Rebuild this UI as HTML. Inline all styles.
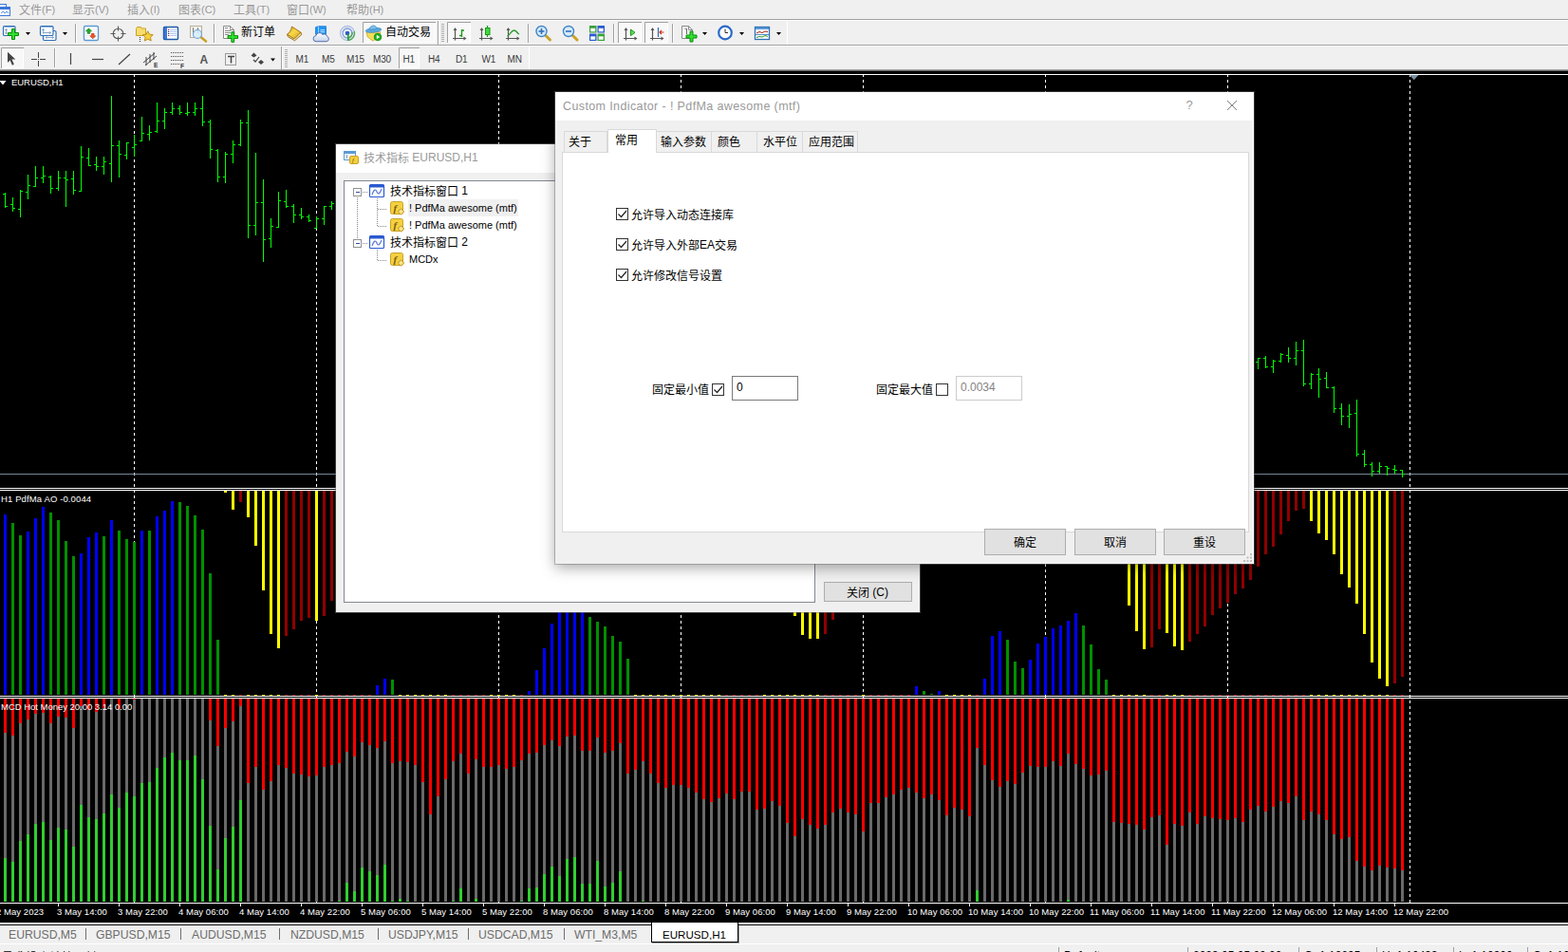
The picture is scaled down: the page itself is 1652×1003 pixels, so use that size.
<!DOCTYPE html><html><head><meta charset="utf-8"><title>MT4</title><style>html,body{margin:0;padding:0}
body{width:1652px;height:1003px;overflow:hidden;position:relative;background:#f0f0f0;font-family:"Liberation Sans","Noto Sans CJK SC",sans-serif;font-size:12px;color:#000}
.lb{position:absolute;white-space:nowrap}
.lb svg{vertical-align:top;display:inline-block;overflow:visible}
.lb svg text{font-family:"Liberation Sans","Noto Sans CJK SC",sans-serif}
.lb span{vertical-align:top;display:inline-block;white-space:pre}
.ct{position:absolute;color:#fff;font-size:9.5px;line-height:12px;white-space:nowrap;letter-spacing:0.05px}
.abs{position:absolute}
.btn{position:absolute;box-sizing:border-box;background:#e1e1e1;border:1px solid #adadad}
.tab{position:absolute;box-sizing:border-box;background:#f0f0f0;border:1px solid #d9d9d9;border-bottom:none}
.cb{position:absolute;box-sizing:border-box;width:13px;height:13px;background:#fff;border:1px solid #333}
.tf{position:absolute;top:57px;font-size:10px;line-height:12px;color:#3c3c3c;letter-spacing:-0.2px}
.ctab{position:absolute;top:978px;font-size:12.2px;line-height:14px;color:#6d6d6d;white-space:nowrap}
.csep{position:absolute;top:978px;width:1px;height:12px;background:#6d6d6d}
.mn span{font-size:11px}
</style></head><body><svg id="chart" width="1652" height="1003" viewBox="0 0 1652 1003" shape-rendering="crispEdges" style="position:absolute;left:0;top:0"><rect x="0" y="73" width="1652" height="1" fill="#a0a0a0"/><rect x="0" y="74" width="1652" height="1" fill="#696969"/><rect x="0" y="75" width="1652" height="897" fill="#000"/><rect x="0" y="78" width="1652" height="1" fill="#fff"/><path d="M141.5 78V952M333.5 78V952M525.5 78V952M717.5 78V952M909.5 78V952M1101.5 78V952M1293.5 78V952M1485.5 78V952" stroke="#fff" stroke-width="1" stroke-dasharray="3 3" fill="none"/><rect x="0" y="499" width="1652" height="1" fill="#778899"/><rect x="0" y="514" width="1652" height="1" fill="#fff"/><rect x="0" y="516" width="1652" height="1" fill="#fff"/><rect x="0" y="733" width="1652" height="1" fill="#fff"/><rect x="0" y="735" width="1652" height="1" fill="#fff"/><rect x="0" y="951" width="1652" height="1" fill="#fff"/><path d="M1485 79h9.500l-4.750 5.300z" fill="#7b8ea3" shape-rendering="auto"/><path d="M5 203h1v16h-1zM3 204h2v1h-2zM6 217h2v1h-2zM13 208h1v15h-1zM11 215h2v1h-2zM14 219h2v1h-2zM21 200h1v29h-1zM19 220h2v1h-2zM22 201h2v1h-2zM29 184h1v26h-1zM27 202h2v1h-2zM30 195h2v1h-2zM37 175h1v22h-1zM35 196h2v1h-2zM38 187h2v1h-2zM45 175h1v18h-1zM43 187h2v1h-2zM46 185h2v1h-2zM53 185h1v19h-1zM51 186h2v1h-2zM54 198h2v1h-2zM61 180h1v21h-1zM59 198h2v1h-2zM62 187h2v1h-2zM69 180h1v38h-1zM67 187h2v1h-2zM70 189h2v1h-2zM77 180h1v25h-1zM75 188h2v1h-2zM78 200h2v1h-2zM85 154h1v48h-1zM83 201h2v1h-2zM86 165h2v1h-2zM93 156h1v19h-1zM91 166h2v1h-2zM94 174h2v1h-2zM101 165h1v15h-1zM99 173h2v1h-2zM102 175h2v1h-2zM109 165h1v19h-1zM107 175h2v1h-2zM110 170h2v1h-2zM117 101h1v91h-1zM115 172h2v1h-2zM118 153h2v1h-2zM125 148h1v39h-1zM123 153h2v1h-2zM126 162h2v1h-2zM133 150h1v18h-1zM131 163h2v1h-2zM134 150h2v1h-2zM141 142h1v23h-1zM139 155h2v1h-2zM142 152h2v1h-2zM149 123h1v26h-1zM147 148h2v1h-2zM150 140h2v1h-2zM157 132h1v16h-1zM155 141h2v1h-2zM158 139h2v1h-2zM165 108h1v32h-1zM163 138h2v1h-2zM166 127h2v1h-2zM173 114h1v22h-1zM171 127h2v1h-2zM174 118h2v1h-2zM181 108h1v13h-1zM179 118h2v1h-2zM182 114h2v1h-2zM189 111h1v10h-1zM187 114h2v1h-2zM190 118h2v1h-2zM197 108h1v14h-1zM195 119h2v1h-2zM198 118h2v1h-2zM205 108h1v14h-1zM203 118h2v1h-2zM206 114h2v1h-2zM213 101h1v32h-1zM211 114h2v1h-2zM214 128h2v1h-2zM221 126h1v41h-1zM219 128h2v1h-2zM222 157h2v1h-2zM229 157h1v35h-1zM227 158h2v1h-2zM230 186h2v1h-2zM237 160h1v33h-1zM235 186h2v1h-2zM238 162h2v1h-2zM245 148h1v24h-1zM243 162h2v1h-2zM246 152h2v1h-2zM253 126h1v28h-1zM251 152h2v1h-2zM254 129h2v1h-2zM261 116h1v135h-1zM259 129h2v1h-2zM262 237h2v1h-2zM269 161h1v87h-1zM267 237h2v1h-2zM270 213h2v1h-2zM277 189h1v87h-1zM275 213h2v1h-2zM278 252h2v1h-2zM285 230h1v31h-1zM283 251h2v1h-2zM286 238h2v1h-2zM293 202h1v38h-1zM291 239h2v1h-2zM294 211h2v1h-2zM301 200h1v19h-1zM299 212h2v1h-2zM302 217h2v1h-2zM309 215h1v20h-1zM307 217h2v1h-2zM310 226h2v1h-2zM317 219h1v12h-1zM315 226h2v1h-2zM318 228h2v1h-2zM325 226h1v8h-1zM323 228h2v1h-2zM326 232h2v1h-2zM333 228h1v13h-1zM331 240h2v1h-2zM334 230h2v1h-2zM341 217h1v20h-1zM339 230h2v1h-2zM342 217h2v1h-2zM349 212h1v9h-1zM347 217h2v1h-2zM350 214h2v1h-2zM1325 377h1v12h-1zM1323 381h2v1h-2zM1326 377h2v1h-2zM1333 375h1v13h-1zM1331 377h2v1h-2zM1334 386h2v1h-2zM1341 379h1v14h-1zM1339 386h2v1h-2zM1342 380h2v1h-2zM1349 372h1v10h-1zM1347 380h2v1h-2zM1350 373h2v1h-2zM1357 366h1v16h-1zM1355 374h2v1h-2zM1358 377h2v1h-2zM1365 360h1v25h-1zM1363 377h2v1h-2zM1366 369h2v1h-2zM1373 358h1v49h-1zM1371 369h2v1h-2zM1374 404h2v1h-2zM1381 393h1v17h-1zM1379 404h2v1h-2zM1382 394h2v1h-2zM1389 388h1v31h-1zM1387 394h2v1h-2zM1390 399h2v1h-2zM1397 392h1v17h-1zM1395 398h2v1h-2zM1398 408h2v1h-2zM1405 407h1v28h-1zM1403 408h2v1h-2zM1406 430h2v1h-2zM1413 425h1v23h-1zM1411 430h2v1h-2zM1414 438h2v1h-2zM1421 426h1v25h-1zM1419 438h2v1h-2zM1422 436h2v1h-2zM1429 421h1v60h-1zM1427 435h2v1h-2zM1430 478h2v1h-2zM1437 474h1v18h-1zM1435 478h2v1h-2zM1438 489h2v1h-2zM1445 487h1v15h-1zM1443 489h2v1h-2zM1446 496h2v1h-2zM1453 487h1v12h-1zM1451 496h2v1h-2zM1454 491h2v1h-2zM1461 491h1v10h-1zM1459 491h2v1h-2zM1462 493h2v1h-2zM1469 490h1v9h-1zM1467 494h2v1h-2zM1470 495h2v1h-2zM1477 495h1v8h-1zM1475 495h2v1h-2zM1478 499h2v1h-2z" fill="#00ff00"/><path d="M4 542h3v190h-3zM28 560h3v172h-3zM36 546h3v186h-3zM44 534h3v198h-3zM84 583h3v149h-3zM92 566h3v166h-3zM100 561h3v171h-3zM116 548h3v184h-3zM148 559h3v173h-3zM164 544h3v188h-3zM172 538h3v194h-3zM180 528h3v204h-3zM396 722h3v10h-3zM404 715h3v17h-3zM556 728h3v4h-3zM564 706h3v26h-3zM572 683h3v49h-3zM580 657h3v75h-3zM588 640h3v92h-3zM596 630h3v102h-3zM604 625h3v107h-3zM612 632h3v100h-3zM964 723h3v9h-3zM988 728h3v4h-3zM1036 715h3v17h-3zM1044 670h3v62h-3zM1052 665h3v67h-3zM1084 695h3v37h-3zM1092 678h3v54h-3zM1100 671h3v61h-3zM1108 662h3v70h-3zM1116 659h3v73h-3zM1124 654h3v78h-3zM1132 646h3v86h-3z" fill="#0000ff"/><path d="M12 551h3v181h-3zM20 564h3v168h-3zM52 540h3v192h-3zM60 548h3v184h-3zM68 570h3v162h-3zM76 586h3v146h-3zM108 565h3v167h-3zM124 559h3v173h-3zM132 568h3v164h-3zM140 571h3v161h-3zM156 559h3v173h-3zM188 529h3v203h-3zM196 533h3v199h-3zM204 543h3v189h-3zM212 558h3v174h-3zM220 604h3v128h-3zM228 674h3v58h-3zM412 716h3v16h-3zM620 650h3v82h-3zM628 655h3v77h-3zM636 660h3v72h-3zM644 670h3v62h-3zM652 676h3v56h-3zM660 694h3v38h-3zM972 728h3v4h-3zM980 731h3v1h-3zM1060 674h3v58h-3zM1068 697h3v35h-3zM1076 704h3v28h-3zM1140 659h3v73h-3zM1148 679h3v53h-3zM1156 705h3v27h-3zM1164 716h3v16h-3z" fill="#009000"/><path d="M236 517h3v2h-3zM236 732h3v1h-3zM244 517h3v20h-3zM244 732h3v1h-3zM260 517h3v28h-3zM260 732h3v1h-3zM268 517h3v58h-3zM268 732h3v1h-3zM276 517h3v105h-3zM276 732h3v1h-3zM284 517h3v151h-3zM284 732h3v1h-3zM292 517h3v166h-3zM292 732h3v1h-3zM332 517h3v137h-3zM332 732h3v1h-3zM420 517h3v3h-3zM420 732h3v1h-3zM428 517h3v8h-3zM428 732h3v1h-3zM436 517h3v13h-3zM436 732h3v1h-3zM444 517h3v18h-3zM444 732h3v1h-3zM452 517h3v23h-3zM452 732h3v1h-3zM460 517h3v28h-3zM460 732h3v1h-3zM468 517h3v33h-3zM468 732h3v1h-3zM516 517h3v13h-3zM516 732h3v1h-3zM524 517h3v18h-3zM524 732h3v1h-3zM532 517h3v23h-3zM532 732h3v1h-3zM540 517h3v13h-3zM540 732h3v1h-3zM668 517h3v8h-3zM668 732h3v1h-3zM676 517h3v18h-3zM676 732h3v1h-3zM684 517h3v28h-3zM684 732h3v1h-3zM692 517h3v38h-3zM692 732h3v1h-3zM700 517h3v48h-3zM700 732h3v1h-3zM708 517h3v58h-3zM708 732h3v1h-3zM716 517h3v68h-3zM716 732h3v1h-3zM724 517h3v78h-3zM724 732h3v1h-3zM732 517h3v88h-3zM732 732h3v1h-3zM740 517h3v95h-3zM740 732h3v1h-3zM748 517h3v101h-3zM748 732h3v1h-3zM756 517h3v105h-3zM756 732h3v1h-3zM804 517h3v83h-3zM804 732h3v1h-3zM812 517h3v95h-3zM812 732h3v1h-3zM820 517h3v108h-3zM820 732h3v1h-3zM828 517h3v121h-3zM828 732h3v1h-3zM836 517h3v132h-3zM836 732h3v1h-3zM844 517h3v152h-3zM844 732h3v1h-3zM852 517h3v156h-3zM852 732h3v1h-3zM860 517h3v156h-3zM860 732h3v1h-3zM908 517h3v93h-3zM908 732h3v1h-3zM996 517h3v3h-3zM996 732h3v1h-3zM1004 517h3v6h-3zM1004 732h3v1h-3zM1012 517h3v9h-3zM1012 732h3v1h-3zM1020 517h3v6h-3zM1020 732h3v1h-3zM1172 517h3v43h-3zM1172 732h3v1h-3zM1180 517h3v73h-3zM1180 732h3v1h-3zM1188 517h3v121h-3zM1188 732h3v1h-3zM1196 517h3v148h-3zM1196 732h3v1h-3zM1204 517h3v167h-3zM1204 732h3v1h-3zM1228 517h3v150h-3zM1228 732h3v1h-3zM1236 517h3v164h-3zM1236 732h3v1h-3zM1244 517h3v168h-3zM1244 732h3v1h-3zM1380 517h3v32h-3zM1380 732h3v1h-3zM1388 517h3v45h-3zM1388 732h3v1h-3zM1396 517h3v52h-3zM1396 732h3v1h-3zM1404 517h3v67h-3zM1404 732h3v1h-3zM1412 517h3v88h-3zM1412 732h3v1h-3zM1420 517h3v102h-3zM1420 732h3v1h-3zM1428 517h3v119h-3zM1428 732h3v1h-3zM1436 517h3v151h-3zM1436 732h3v1h-3zM1444 517h3v181h-3zM1444 732h3v1h-3zM1452 517h3v198h-3zM1452 732h3v1h-3zM1460 517h3v206h-3zM1460 732h3v1h-3z" fill="#ffff00"/><path d="M252 517h3v12h-3zM252 732h3v1h-3zM300 517h3v153h-3zM300 732h3v1h-3zM308 517h3v146h-3zM308 732h3v1h-3zM316 517h3v137h-3zM316 732h3v1h-3zM324 517h3v134h-3zM324 732h3v1h-3zM340 517h3v132h-3zM340 732h3v1h-3zM348 517h3v116h-3zM348 732h3v1h-3zM356 517h3v103h-3zM356 732h3v1h-3zM364 517h3v83h-3zM364 732h3v1h-3zM372 517h3v68h-3zM372 732h3v1h-3zM380 517h3v43h-3zM380 732h3v1h-3zM388 517h3v13h-3zM388 732h3v1h-3zM476 517h3v28h-3zM476 732h3v1h-3zM484 517h3v23h-3zM484 732h3v1h-3zM492 517h3v18h-3zM492 732h3v1h-3zM500 517h3v13h-3zM500 732h3v1h-3zM508 517h3v8h-3zM508 732h3v1h-3zM548 517h3v3h-3zM548 732h3v1h-3zM764 517h3v101h-3zM764 732h3v1h-3zM772 517h3v95h-3zM772 732h3v1h-3zM780 517h3v88h-3zM780 732h3v1h-3zM788 517h3v81h-3zM788 732h3v1h-3zM796 517h3v75h-3zM796 732h3v1h-3zM868 517h3v151h-3zM868 732h3v1h-3zM876 517h3v136h-3zM876 732h3v1h-3zM884 517h3v123h-3zM884 732h3v1h-3zM892 517h3v108h-3zM892 732h3v1h-3zM900 517h3v88h-3zM900 732h3v1h-3zM916 517h3v73h-3zM916 732h3v1h-3zM924 517h3v53h-3zM924 732h3v1h-3zM932 517h3v33h-3zM932 732h3v1h-3zM940 517h3v18h-3zM940 732h3v1h-3zM948 517h3v8h-3zM948 732h3v1h-3zM956 517h3v2h-3zM956 732h3v1h-3zM1028 517h3v3h-3zM1028 732h3v1h-3zM1212 517h3v165h-3zM1212 732h3v1h-3zM1220 517h3v146h-3zM1220 732h3v1h-3zM1252 517h3v159h-3zM1252 732h3v1h-3zM1260 517h3v151h-3zM1260 732h3v1h-3zM1268 517h3v143h-3zM1268 732h3v1h-3zM1276 517h3v131h-3zM1276 732h3v1h-3zM1284 517h3v124h-3zM1284 732h3v1h-3zM1292 517h3v118h-3zM1292 732h3v1h-3zM1300 517h3v109h-3zM1300 732h3v1h-3zM1308 517h3v103h-3zM1308 732h3v1h-3zM1316 517h3v94h-3zM1316 732h3v1h-3zM1324 517h3v80h-3zM1324 732h3v1h-3zM1332 517h3v67h-3zM1332 732h3v1h-3zM1340 517h3v59h-3zM1340 732h3v1h-3zM1348 517h3v46h-3zM1348 732h3v1h-3zM1356 517h3v32h-3zM1356 732h3v1h-3zM1364 517h3v21h-3zM1364 732h3v1h-3zM1372 517h3v19h-3zM1372 732h3v1h-3zM1468 517h3v203h-3zM1468 732h3v1h-3zM1476 517h3v196h-3zM1476 732h3v1h-3z" fill="#900000"/><path d="M4 736h3v214h-3zM12 736h3v214h-3zM20 736h3v214h-3zM28 736h3v214h-3zM36 736h3v214h-3zM44 736h3v214h-3zM52 736h3v214h-3zM60 736h3v214h-3zM68 736h3v214h-3zM76 736h3v214h-3zM84 736h3v214h-3zM92 736h3v214h-3zM100 736h3v214h-3zM108 736h3v214h-3zM116 736h3v214h-3zM124 736h3v214h-3zM132 736h3v214h-3zM140 736h3v214h-3zM148 736h3v214h-3zM156 736h3v214h-3zM164 736h3v214h-3zM172 736h3v214h-3zM180 736h3v214h-3zM188 736h3v214h-3zM196 736h3v214h-3zM204 736h3v214h-3zM212 736h3v214h-3zM220 736h3v214h-3zM228 736h3v214h-3zM236 736h3v214h-3zM244 736h3v214h-3zM252 736h3v214h-3zM260 736h3v214h-3zM268 736h3v214h-3zM276 736h3v214h-3zM284 736h3v214h-3zM292 736h3v214h-3zM300 736h3v214h-3zM308 736h3v214h-3zM316 736h3v214h-3zM324 736h3v214h-3zM332 736h3v214h-3zM340 736h3v214h-3zM348 736h3v214h-3zM356 736h3v214h-3zM364 736h3v214h-3zM372 736h3v214h-3zM380 736h3v214h-3zM388 736h3v214h-3zM396 736h3v214h-3zM404 736h3v214h-3zM412 736h3v214h-3zM420 736h3v214h-3zM428 736h3v214h-3zM436 736h3v214h-3zM444 736h3v214h-3zM452 736h3v214h-3zM460 736h3v214h-3zM468 736h3v214h-3zM476 736h3v214h-3zM484 736h3v214h-3zM492 736h3v214h-3zM500 736h3v214h-3zM508 736h3v214h-3zM516 736h3v214h-3zM524 736h3v214h-3zM532 736h3v214h-3zM540 736h3v214h-3zM548 736h3v214h-3zM556 736h3v214h-3zM564 736h3v214h-3zM572 736h3v214h-3zM580 736h3v214h-3zM588 736h3v214h-3zM596 736h3v214h-3zM604 736h3v214h-3zM612 736h3v214h-3zM620 736h3v214h-3zM628 736h3v214h-3zM636 736h3v214h-3zM644 736h3v214h-3zM652 736h3v214h-3zM660 736h3v214h-3zM668 736h3v214h-3zM676 736h3v214h-3zM684 736h3v214h-3zM692 736h3v214h-3zM700 736h3v214h-3zM708 736h3v214h-3zM716 736h3v214h-3zM724 736h3v214h-3zM732 736h3v214h-3zM740 736h3v214h-3zM748 736h3v214h-3zM756 736h3v214h-3zM764 736h3v214h-3zM772 736h3v214h-3zM780 736h3v214h-3zM788 736h3v214h-3zM796 736h3v214h-3zM804 736h3v214h-3zM812 736h3v214h-3zM820 736h3v214h-3zM828 736h3v214h-3zM836 736h3v214h-3zM844 736h3v214h-3zM852 736h3v214h-3zM860 736h3v214h-3zM868 736h3v214h-3zM876 736h3v214h-3zM884 736h3v214h-3zM892 736h3v214h-3zM900 736h3v214h-3zM908 736h3v214h-3zM916 736h3v214h-3zM924 736h3v214h-3zM932 736h3v214h-3zM940 736h3v214h-3zM948 736h3v214h-3zM956 736h3v214h-3zM964 736h3v214h-3zM972 736h3v214h-3zM980 736h3v214h-3zM988 736h3v214h-3zM996 736h3v214h-3zM1004 736h3v214h-3zM1012 736h3v214h-3zM1020 736h3v214h-3zM1028 736h3v214h-3zM1036 736h3v214h-3zM1044 736h3v214h-3zM1052 736h3v214h-3zM1060 736h3v214h-3zM1068 736h3v214h-3zM1076 736h3v214h-3zM1084 736h3v214h-3zM1092 736h3v214h-3zM1100 736h3v214h-3zM1108 736h3v214h-3zM1116 736h3v214h-3zM1124 736h3v214h-3zM1132 736h3v214h-3zM1140 736h3v214h-3zM1148 736h3v214h-3zM1156 736h3v214h-3zM1164 736h3v214h-3zM1172 736h3v214h-3zM1180 736h3v214h-3zM1188 736h3v214h-3zM1196 736h3v214h-3zM1204 736h3v214h-3zM1212 736h3v214h-3zM1220 736h3v214h-3zM1228 736h3v214h-3zM1236 736h3v214h-3zM1244 736h3v214h-3zM1252 736h3v214h-3zM1260 736h3v214h-3zM1268 736h3v214h-3zM1276 736h3v214h-3zM1284 736h3v214h-3zM1292 736h3v214h-3zM1300 736h3v214h-3zM1308 736h3v214h-3zM1316 736h3v214h-3zM1324 736h3v214h-3zM1332 736h3v214h-3zM1340 736h3v214h-3zM1348 736h3v214h-3zM1356 736h3v214h-3zM1364 736h3v214h-3zM1372 736h3v214h-3zM1380 736h3v214h-3zM1388 736h3v214h-3zM1396 736h3v214h-3zM1404 736h3v214h-3zM1412 736h3v214h-3zM1420 736h3v214h-3zM1428 736h3v214h-3zM1436 736h3v214h-3zM1444 736h3v214h-3zM1452 736h3v214h-3zM1460 736h3v214h-3zM1468 736h3v214h-3zM1476 736h3v214h-3z" fill="#696969"/><path d="M4 736h3v36h-3zM12 736h3v39h-3zM20 736h3v26h-3zM28 736h3v22h-3zM36 736h3v16h-3zM44 736h3v15h-3zM52 736h3v26h-3zM60 736h3v19h-3zM68 736h3v20h-3zM76 736h3v31h-3zM84 736h3v8h-3zM92 736h3v12h-3zM100 736h3v14h-3zM108 736h3v10h-3zM124 736h3v11h-3zM140 736h3v1h-3zM220 736h3v23h-3zM228 736h3v50h-3zM236 736h3v31h-3zM244 736h3v24h-3zM252 736h3v8h-3zM260 736h3v89h-3zM268 736h3v72h-3zM276 736h3v96h-3zM284 736h3v87h-3zM292 736h3v70h-3zM300 736h3v73h-3zM308 736h3v79h-3zM316 736h3v80h-3zM324 736h3v82h-3zM332 736h3v81h-3zM340 736h3v72h-3zM348 736h3v70h-3zM356 736h3v68h-3zM364 736h3v56h-3zM372 736h3v61h-3zM380 736h3v46h-3zM388 736h3v49h-3zM396 736h3v52h-3zM404 736h3v45h-3zM412 736h3v68h-3zM420 736h3v66h-3zM428 736h3v67h-3zM436 736h3v70h-3zM444 736h3v88h-3zM452 736h3v122h-3zM460 736h3v103h-3zM468 736h3v85h-3zM476 736h3v66h-3zM484 736h3v58h-3zM492 736h3v79h-3zM500 736h3v64h-3zM508 736h3v72h-3zM516 736h3v72h-3zM524 736h3v70h-3zM532 736h3v74h-3zM540 736h3v72h-3zM548 736h3v65h-3zM556 736h3v58h-3zM564 736h3v57h-3zM572 736h3v49h-3zM580 736h3v44h-3zM588 736h3v50h-3zM596 736h3v40h-3zM604 736h3v39h-3zM612 736h3v55h-3zM620 736h3v55h-3zM628 736h3v41h-3zM636 736h3v57h-3zM644 736h3v55h-3zM652 736h3v47h-3zM660 736h3v79h-3zM668 736h3v75h-3zM676 736h3v66h-3zM684 736h3v79h-3zM692 736h3v89h-3zM700 736h3v94h-3zM708 736h3v91h-3zM716 736h3v91h-3zM724 736h3v94h-3zM732 736h3v99h-3zM740 736h3v106h-3zM748 736h3v109h-3zM756 736h3v105h-3zM764 736h3v100h-3zM772 736h3v106h-3zM780 736h3v98h-3zM788 736h3v98h-3zM796 736h3v117h-3zM804 736h3v116h-3zM812 736h3v108h-3zM820 736h3v113h-3zM828 736h3v131h-3zM836 736h3v145h-3zM844 736h3v127h-3zM852 736h3v133h-3zM860 736h3v137h-3zM868 736h3v133h-3zM876 736h3v120h-3zM884 736h3v116h-3zM892 736h3v120h-3zM900 736h3v122h-3zM908 736h3v140h-3zM916 736h3v110h-3zM924 736h3v110h-3zM932 736h3v104h-3zM940 736h3v101h-3zM948 736h3v96h-3zM956 736h3v94h-3zM964 736h3v99h-3zM972 736h3v105h-3zM980 736h3v101h-3zM988 736h3v107h-3zM996 736h3v123h-3zM1004 736h3v115h-3zM1012 736h3v117h-3zM1020 736h3v124h-3zM1028 736h3v52h-3zM1036 736h3v70h-3zM1044 736h3v86h-3zM1052 736h3v93h-3zM1060 736h3v87h-3zM1068 736h3v90h-3zM1076 736h3v78h-3zM1084 736h3v71h-3zM1092 736h3v72h-3zM1100 736h3v72h-3zM1108 736h3v66h-3zM1116 736h3v71h-3zM1124 736h3v58h-3zM1132 736h3v69h-3zM1140 736h3v74h-3zM1148 736h3v81h-3zM1156 736h3v80h-3zM1164 736h3v76h-3zM1172 736h3v130h-3zM1180 736h3v131h-3zM1188 736h3v132h-3zM1196 736h3v133h-3zM1204 736h3v138h-3zM1212 736h3v125h-3zM1220 736h3v123h-3zM1228 736h3v154h-3zM1236 736h3v132h-3zM1244 736h3v134h-3zM1252 736h3v120h-3zM1260 736h3v132h-3zM1268 736h3v124h-3zM1276 736h3v126h-3zM1284 736h3v127h-3zM1292 736h3v128h-3zM1300 736h3v126h-3zM1308 736h3v130h-3zM1316 736h3v117h-3zM1324 736h3v113h-3zM1332 736h3v119h-3zM1340 736h3v114h-3zM1348 736h3v108h-3zM1356 736h3v110h-3zM1364 736h3v103h-3zM1372 736h3v128h-3zM1380 736h3v119h-3zM1388 736h3v122h-3zM1396 736h3v128h-3zM1404 736h3v143h-3zM1412 736h3v148h-3zM1420 736h3v146h-3zM1428 736h3v171h-3zM1436 736h3v177h-3zM1444 736h3v181h-3zM1452 736h3v176h-3zM1460 736h3v178h-3zM1468 736h3v179h-3zM1476 736h3v181h-3z" fill="#ff0000"/><path d="M4 904h3v46h-3zM12 908h3v42h-3zM20 886h3v64h-3zM28 879h3v71h-3zM36 868h3v82h-3zM44 866h3v84h-3zM52 885h3v65h-3zM60 872h3v78h-3zM68 874h3v76h-3zM76 892h3v58h-3zM84 848h3v102h-3zM92 861h3v89h-3zM100 863h3v87h-3zM108 857h3v93h-3zM116 837h3v113h-3zM124 851h3v99h-3zM132 835h3v115h-3zM140 839h3v111h-3zM148 825h3v125h-3zM156 824h3v126h-3zM164 809h3v141h-3zM172 798h3v152h-3zM180 793h3v157h-3zM188 801h3v149h-3zM196 801h3v149h-3zM204 796h3v154h-3zM212 821h3v129h-3zM220 870h3v80h-3zM228 916h3v34h-3zM236 883h3v67h-3zM244 871h3v79h-3zM252 843h3v107h-3zM356 949h3v1h-3zM364 930h3v20h-3zM372 939h3v11h-3zM380 914h3v36h-3zM388 918h3v32h-3zM396 922h3v28h-3zM404 911h3v39h-3zM412 949h3v1h-3zM420 947h3v3h-3zM428 949h3v1h-3zM476 949h3v1h-3zM484 936h3v14h-3zM500 947h3v3h-3zM548 949h3v1h-3zM556 936h3v14h-3zM564 935h3v15h-3zM572 921h3v29h-3zM580 913h3v37h-3zM588 923h3v27h-3zM596 905h3v45h-3zM604 903h3v47h-3zM612 931h3v19h-3zM620 931h3v19h-3zM628 907h3v43h-3zM636 934h3v16h-3zM644 930h3v20h-3zM652 918h3v32h-3zM676 949h3v1h-3zM1028 938h3v12h-3zM1124 948h3v2h-3z" fill="#32cd32"/><path d="M-3 952h1v3h-1zM61 952h1v3h-1zM125 952h1v3h-1zM189 952h1v3h-1zM253 952h1v3h-1zM317 952h1v3h-1zM381 952h1v3h-1zM445 952h1v3h-1zM509 952h1v3h-1zM573 952h1v3h-1zM637 952h1v3h-1zM701 952h1v3h-1zM765 952h1v3h-1zM829 952h1v3h-1zM893 952h1v3h-1zM957 952h1v3h-1zM1021 952h1v3h-1zM1085 952h1v3h-1zM1149 952h1v3h-1zM1213 952h1v3h-1zM1277 952h1v3h-1zM1341 952h1v3h-1zM1405 952h1v3h-1zM1469 952h1v3h-1z" fill="#fff"/></svg><div class="ct" style="left:-4px;top:955px">2 May 2023</div><div class="ct" style="left:60px;top:955px">3 May 14:00</div><div class="ct" style="left:124px;top:955px">3 May 22:00</div><div class="ct" style="left:188px;top:955px">4 May 06:00</div><div class="ct" style="left:252px;top:955px">4 May 14:00</div><div class="ct" style="left:316px;top:955px">4 May 22:00</div><div class="ct" style="left:380px;top:955px">5 May 06:00</div><div class="ct" style="left:444px;top:955px">5 May 14:00</div><div class="ct" style="left:508px;top:955px">5 May 22:00</div><div class="ct" style="left:572px;top:955px">8 May 06:00</div><div class="ct" style="left:636px;top:955px">8 May 14:00</div><div class="ct" style="left:700px;top:955px">8 May 22:00</div><div class="ct" style="left:764px;top:955px">9 May 06:00</div><div class="ct" style="left:828px;top:955px">9 May 14:00</div><div class="ct" style="left:892px;top:955px">9 May 22:00</div><div class="ct" style="left:956px;top:955px">10 May 06:00</div><div class="ct" style="left:1020px;top:955px">10 May 14:00</div><div class="ct" style="left:1084px;top:955px">10 May 22:00</div><div class="ct" style="left:1148px;top:955px">11 May 06:00</div><div class="ct" style="left:1212px;top:955px">11 May 14:00</div><div class="ct" style="left:1276px;top:955px">11 May 22:00</div><div class="ct" style="left:1340px;top:955px">12 May 06:00</div><div class="ct" style="left:1404px;top:955px">12 May 14:00</div><div class="ct" style="left:1468px;top:955px">12 May 22:00</div><div class="ct" style="left:12px;top:81px;letter-spacing:-0.05px">EURUSD,H1</div><div class="ct" style="left:1px;top:520px;letter-spacing:0.12px">H1 PdfMa AO -0.0044</div><div class="ct" style="left:1px;top:739px;letter-spacing:-0.02px">MCD Hot Money 20.00 3.14 0.00</div><svg style="position:absolute;left:0;top:85px" width="9" height="5"><path d="M-0.5 0h7l-3.500 4.500z" fill="#fff"/></svg><div class="abs" style="left:0;top:20px;width:1652px;height:1px;background:#a0a0a0"></div><div class="abs" style="left:0;top:21px;width:1652px;height:1px;background:#fff"></div><div class="abs" style="left:0;top:47px;width:1652px;height:1px;background:#a0a0a0"></div><div class="abs" style="left:0;top:48px;width:1652px;height:1px;background:#fff"></div><div class="lb mn" style="left:20px;top:2px;font-size:12px;line-height:16px;height:16px;color:#999;"><svg width="24" height="16" viewBox="0 0 2000 1333" fill="#999"><text x="0" y="1047" font-size="1000" fill="#999">文件</text></svg><span>(F)</span></div><div class="lb mn" style="left:76px;top:2px;font-size:12px;line-height:16px;height:16px;color:#999;"><svg width="24" height="16" viewBox="0 0 2000 1333" fill="#999"><text x="0" y="1047" font-size="1000" fill="#999">显示</text></svg><span>(V)</span></div><div class="lb mn" style="left:134px;top:2px;font-size:12px;line-height:16px;height:16px;color:#999;"><svg width="24" height="16" viewBox="0 0 2000 1333" fill="#999"><text x="0" y="1047" font-size="1000" fill="#999">插入</text></svg><span>(I)</span></div><div class="lb mn" style="left:188px;top:2px;font-size:12px;line-height:16px;height:16px;color:#999;"><svg width="24" height="16" viewBox="0 0 2000 1333" fill="#999"><text x="0" y="1047" font-size="1000" fill="#999">图表</text></svg><span>(C)</span></div><div class="lb mn" style="left:246px;top:2px;font-size:12px;line-height:16px;height:16px;color:#999;"><svg width="24" height="16" viewBox="0 0 2000 1333" fill="#999"><text x="0" y="1047" font-size="1000" fill="#999">工具</text></svg><span>(T)</span></div><div class="lb mn" style="left:302px;top:2px;font-size:12px;line-height:16px;height:16px;color:#999;"><svg width="24" height="16" viewBox="0 0 2000 1333" fill="#999"><text x="0" y="1047" font-size="1000" fill="#999">窗口</text></svg><span>(W)</span></div><div class="lb mn" style="left:365px;top:2px;font-size:12px;line-height:16px;height:16px;color:#999;"><svg width="24" height="16" viewBox="0 0 2000 1333" fill="#999"><text x="0" y="1047" font-size="1000" fill="#999">帮助</text></svg><span>(H)</span></div><svg class="abs" style="left:0;top:2px" width="12" height="16" viewBox="0 0 12 16"><rect x="-2.5" y="2.5" width="9" height="9" fill="#fff" stroke="#3a78d8"/><rect x="-0.5" y="5.5" width="11" height="9" fill="#fff" stroke="#3a78d8"/><rect x="0" y="6" width="10" height="2" fill="#3a78d8"/><path d="M1 12l2-2 2 2 2-2 2 2" fill="none" stroke="#3a78d8" stroke-width="0.8"/></svg><svg class="abs" style="left:0;top:0" width="1652" height="73" viewBox="0 0 1652 73"><rect x="3.500" y="27.500" width="12.500" height="10" rx="1.200" fill="#fff" stroke="#2f6fb5" stroke-width="1.200"/><path d="M4.500 28.500h10.500" stroke="#8ab4e0"/><path d="M6.500 30.500v5.500M5.300 32l1.200-1.500 1.200 1.500M5.300 34.500l1.200 1.500 1.200-1.500" stroke="#7a9cc0" stroke-width=".9" fill="none"/><path d="M12.500 30.500h3v4h4v3h-4v4h-3v-4h-4v-3h4z" fill="#30e030" stroke="#0a8a0a" stroke-width="1" stroke-linejoin="round"/><path d="M27 34h5l-2.500 3z" fill="#000"/><rect x="45.500" y="32.500" width="13.500" height="10" rx="1.200" fill="#fff" stroke="#2f6fb5" stroke-width="1.200"/><path d="M48 39.500h8.500M48 39.500l1.500-1.200M48 39.500l1.500 1.200M56.500 39.500l-1.500-1.200M56.500 39.500l-1.500 1.200" stroke="#7a9cc0" stroke-width=".9" fill="none"/><rect x="42.500" y="27.500" width="13.500" height="10" rx="1.200" fill="#fff" stroke="#2f6fb5" stroke-width="1.200"/><path d="M43.500 28.500h11.500" stroke="#8ab4e0"/><path d="M45.500 30.500v5M44.300 32l1.200-1.500 1.200 1.500M45.500 34.500h8M53.500 34.500l-1.500-1.200M53.500 34.500l-1.500 1.200" stroke="#7a9cc0" stroke-width=".9" fill="none"/><path d="M66 34h5l-2.500 3z" fill="#000"/><path d="M79.500 25V45" stroke="#a0a0a0"/><path d="M80.500 25V45" stroke="#fff"/><rect x="88.500" y="27.500" width="15" height="15" rx="1.500" fill="#fff" stroke="#5b9bd5" stroke-width="1.400"/><path d="M90 31.500h12M90 33.500h12M90 35.500h12M90 37.500h12M90 39.500h12" stroke="#e4e8ee" stroke-width=".8"/><path d="M93.500 29.800l3 3h-1.700v2.500h-2.600v-2.500h-1.700z" fill="#22aa22" stroke="#0a7a0a" stroke-width=".6"/><path d="M97.800 40.800l-3-3h1.700v-2.500h2.600v2.500h1.700z" fill="#ee5522" stroke="#b03010" stroke-width=".6"/><circle cx="124.500" cy="35.500" r="5.300" fill="none" stroke="#5a5a5a" stroke-width="1.100"/><path d="M124.500 27.500v5M124.500 38.500v5M116.500 35.500h5M127.500 35.500h5" stroke="#5a5a5a" stroke-width="1.100"/><path d="M143.500 30.500l1-2h4l1 1.500h4v7.500h-10z" fill="#f7dc6f" stroke="#c9a227"/><path d="M155.800 32.800l1.700 3.400 3.700.5-2.700 2.600.7 3.700-3.400-1.800-3.400 1.800.7-3.700-2.700-2.600 3.700-.5z" fill="#f4d03f" stroke="#b8860b" stroke-width=".9"/><path d="M147.500 39v5" stroke="#333" stroke-dasharray="1 1"/><rect x="172.500" y="28.500" width="15" height="13" rx="1" fill="#fff" stroke="#1c5aa8" stroke-width="1.400"/><rect x="173" y="29" width="3" height="12" fill="#3a78d8"/><path d="M178 31.500h8M178 33.500h8M178 35.500h8M178 37.500h8" stroke="#9db8e8" stroke-width=".8"/><path d="M177 31.500h1M177 37.500h1" stroke="#e00"/><path d="M177 33.500h1M177 35.500h1" stroke="#222"/><rect x="200.500" y="27.500" width="12" height="12" fill="#fbfbf5" stroke="#b5ad98"/><path d="M203.500 29v6M208.500 29v6" stroke="#777"/><path d="M211.500 39l5.500 4.500" stroke="#c9a227" stroke-width="2.600" stroke-linecap="round"/><circle cx="208" cy="36" r="4.500" fill="#d6ebfa" fill-opacity=".85" stroke="#6fa8dc" stroke-width="1.200"/><path d="M225.500 25V45" stroke="#a0a0a0"/><path d="M226.500 25V45" stroke="#fff"/><path d="M235.500 27.500h7l4 4v9h-11z" fill="#fff" stroke="#8a8a8a"/><path d="M242.500 27.500v4h4" fill="none" stroke="#8a8a8a"/><path d="M237 32.500h6M237 34.500h6M237 36.500h4M237 29.500h3" stroke="#8a8a8a" stroke-width="1" shape-rendering="crispEdges"/><path d="M243.900 33.700h2.800v3.900h3.900v2.800h-3.900v3.900h-2.800v-3.900h-3.900v-2.800h3.900z" fill="#30e030" stroke="#0a8a0a" stroke-width="1" stroke-linejoin="round"/><defs><linearGradient id="gbk" x1="0" y1="0" x2="1" y2="1"><stop offset="0" stop-color="#c89412"/><stop offset=".45" stop-color="#f8d848"/><stop offset="1" stop-color="#d8a418"/></linearGradient><linearGradient id="gcl" x1="0" y1="0" x2="0" y2="1"><stop offset="0" stop-color="#fff"/><stop offset="1" stop-color="#c4d2ea"/></linearGradient></defs><path d="M302.500 36.500l1 2.300 7 4 7.300-6.300-.5-2z" fill="#e8dca0" stroke="#9a6a10" stroke-width=".9" stroke-linejoin="round"/><path d="M307.500 28l9.300 6-6.800 6.800-7.600-4.500c2.500-1.500 4.500-4.800 5.100-8.300z" fill="url(#gbk)" stroke="#9a6a10" stroke-width=".9" stroke-linejoin="round"/><g transform="translate(0 .7)"><path d="M332.500 28l3-1h8v8.500h-11z" fill="#2196f3" stroke="#1976d2" stroke-width=".8"/><path d="M335.500 27v9" stroke="#bbdefb" stroke-width=".8"/><path d="M337.500 31h4.500M337.500 33h4.500" stroke="#d6ebfa" stroke-width=".9"/><path d="M333.200 43a3 3 0 0 1-.3-6a3.800 3.800 0 0 1 7-1.300a3.200 3.200 0 0 1 4.800 2a2.800 2.800 0 0 1-.5 5.300z" fill="url(#gcl)" stroke="#4a68a8" stroke-width=".9"/></g><circle cx="366" cy="35" r="7.500" fill="none" stroke="#7a9ad8" stroke-opacity=".55" stroke-width="1.300"/><circle cx="366" cy="35" r="5" fill="none" stroke="#4a7ad8" stroke-opacity=".7" stroke-width="1.300"/><circle cx="366" cy="35" r="2.300" fill="#2a5ad0"/><path d="M373.300 33a7.500 7.500 0 0 1-6.300 9.400M370.900 34a5 5 0 0 1-3.900 5.900" fill="none" stroke="#3aa040" stroke-opacity=".8" stroke-width="1.500"/><path d="M366.800 35.500v7.300" stroke="#22a022" stroke-width="1.600"/><rect x="382" y="23" width="77" height="22" fill="#f8f8f8"/><path d="M382.500 45V23.500H459" fill="none" stroke="#a0a0a0"/><path d="M383 44.500H458.500V24" fill="none" stroke="#fff"/><path d="M386 33.800h15l-1.200 3.200-6.800 6.300-5.800-4.500z" fill="#f6dc58" stroke="#c9a227" stroke-width=".8" stroke-linejoin="round"/><ellipse cx="393.500" cy="31.800" rx="8.300" ry="2.400" transform="rotate(-6 393.500 31.800)" fill="#5aa8dc" stroke="#3a88c8" stroke-width=".7"/><path d="M389.300 31.300c0-5.500 7.500-5.800 7.800-.8z" fill="#7cc0ea" stroke="#3a88c8" stroke-width=".7"/><circle cx="398" cy="39" r="3.800" fill="#22b022" stroke="#0a8a0a" stroke-width=".8"/><path d="M396.800 36.800l3.300 2.200-3.300 2.200z" fill="#fff"/><path d="M461.500 22V47" stroke="#a0a0a0"/><path d="M462.500 22V47" stroke="#fff"/><rect x="465" y="25" width="3" height="1" fill="#b0b0b0"/><rect x="465" y="27" width="3" height="1" fill="#b0b0b0"/><rect x="465" y="29" width="3" height="1" fill="#b0b0b0"/><rect x="465" y="31" width="3" height="1" fill="#b0b0b0"/><rect x="465" y="33" width="3" height="1" fill="#b0b0b0"/><rect x="465" y="35" width="3" height="1" fill="#b0b0b0"/><rect x="465" y="37" width="3" height="1" fill="#b0b0b0"/><rect x="465" y="39" width="3" height="1" fill="#b0b0b0"/><rect x="465" y="41" width="3" height="1" fill="#b0b0b0"/><rect x="465" y="43" width="3" height="1" fill="#b0b0b0"/><rect x="471" y="23" width="25" height="22" fill="#f8f8f8"/><path d="M471.500 45V23.500H496" fill="none" stroke="#a0a0a0"/><path d="M472 44.500H495.500V24" fill="none" stroke="#fff"/><path d="M479.500 30.500V42.500M477 40.500H490.500" stroke="#555" stroke-width="1.200" fill="none"/><path d="M479.500 29l2 3h-4zM491.500 40.500l-3 2v-4z" fill="#555"/><path d="M486.500 31v8M486.500 32h2.500M484 37.500h2.500" stroke="#1a9a1a" stroke-width="1.400" fill="none"/><path d="M507.500 30.500V42.500M505 40.500H518.500" stroke="#555" stroke-width="1.200" fill="none"/><path d="M507.500 29l2 3h-4zM519.500 40.500l-3 2v-4z" fill="#555"/><path d="M513.500 27v12" stroke="#1a9a1a" stroke-width="1.200"/><rect x="511.500" y="29.500" width="4.500" height="7" fill="#3ddc3d" stroke="#1a9a1a"/><path d="M535.500 30.500V42.500M533 40.500H546.500" stroke="#555" stroke-width="1.200" fill="none"/><path d="M535.500 29l2 3h-4zM547.500 40.500l-3 2v-4z" fill="#555"/><path d="M534.500 38c3-1 4-6 7-6s3 3 5.500 4" fill="none" stroke="#2a9a2a" stroke-width="1.300"/><path d="M556.500 25V45" stroke="#a0a0a0"/><path d="M557.500 25V45" stroke="#fff"/><path d="M575 37.500L579.500 42" stroke="#c9a227" stroke-width="3" stroke-linecap="round"/><circle cx="570.500" cy="33" r="5.500" fill="#d6ebfa" stroke="#3f86c9" stroke-width="1.400"/><path d="M567.500 33h6" stroke="#2f6fb5" stroke-width="1.600"/><path d="M570.500 30v6" stroke="#2f6fb5" stroke-width="1.600"/><path d="M603.500 37.500L608 42" stroke="#c9a227" stroke-width="3" stroke-linecap="round"/><circle cx="599" cy="33" r="5.500" fill="#d6ebfa" stroke="#3f86c9" stroke-width="1.400"/><path d="M596 33h6" stroke="#2f6fb5" stroke-width="1.600"/><rect x="621" y="27" width="7.500" height="7.500" fill="#3aa03a"/><rect x="622.200" y="29.800" width="5" height="3.500" fill="#fff"/><rect x="629.500" y="27" width="7.500" height="7.500" fill="#2a5ad0"/><rect x="630.700" y="29.800" width="5" height="3.500" fill="#fff"/><rect x="621" y="35.500" width="7.500" height="7.500" fill="#2a5ad0"/><rect x="622.200" y="38.300" width="5" height="3.500" fill="#fff"/><rect x="629.500" y="35.500" width="7.500" height="7.500" fill="#3aa03a"/><rect x="630.700" y="38.300" width="5" height="3.500" fill="#fff"/><path d="M646.500 25V45" stroke="#a0a0a0"/><path d="M647.500 25V45" stroke="#fff"/><rect x="651" y="23" width="25" height="22" fill="#f8f8f8"/><path d="M651.500 45V23.500H676" fill="none" stroke="#a0a0a0"/><path d="M652 44.500H675.500V24" fill="none" stroke="#fff"/><path d="M659.500 30.500V42.500M657 40.500H670.500" stroke="#555" stroke-width="1.200" fill="none"/><path d="M659.500 29l2 3h-4zM671.500 40.500l-3 2v-4z" fill="#555"/><path d="M664.500 31l4.500 3.300-4.500 3.300z" fill="#5fdc5f" stroke="#1a9a1a" stroke-width="1"/><rect x="679" y="23" width="25" height="22" fill="#f8f8f8"/><path d="M679.500 45V23.500H704" fill="none" stroke="#a0a0a0"/><path d="M680 44.500H703.500V24" fill="none" stroke="#fff"/><path d="M687.500 30.500V42.500M685 40.500H698.500" stroke="#555" stroke-width="1.200" fill="none"/><path d="M687.500 29l2 3h-4zM699.500 40.500l-3 2v-4z" fill="#555"/><path d="M693.500 29v10" stroke="#2f6fb5" stroke-width="1.300"/><path d="M695 34h4.500M697 32l-2 2 2 2" stroke="#d03010" stroke-width="1.100" fill="none"/><path d="M708.500 25V45" stroke="#a0a0a0"/><path d="M709.500 25V45" stroke="#fff"/><path d="M718.500 27.500h7l4 4v9h-11z" fill="#fff" stroke="#8a8a8a"/><path d="M725.500 27.500v4h4" fill="none" stroke="#8a8a8a"/><path d="M721.500 31c1-1.500 2-1.500 2 0v5" stroke="#555" fill="none" stroke-width=".9"/><path d="M727 33h3v4h4v3h-4v4h-3v-4h-4v-3h4z" fill="#30e030" stroke="#0a8a0a" stroke-width="1" stroke-linejoin="round"/><path d="M740 34h5l-2.500 3z" fill="#000"/><circle cx="764" cy="34.500" r="6.800" fill="#fff" stroke="#2a6ac8" stroke-width="2.200"/><path d="M764 30.500v4h3" fill="none" stroke="#333" stroke-width="1"/><path d="M779 34h5l-2.500 3z" fill="#000"/><rect x="795.500" y="28.500" width="15" height="13" fill="#fff" stroke="#2f6fb5" stroke-width="1.300"/><rect x="796" y="29" width="14" height="2" fill="#5b9bd5"/><path d="M797 35l3-1.500 3 1 3-1.500 3 .5" fill="none" stroke="#a02010" stroke-width="1"/><path d="M797 39.500l3-1 3 .5 3-1.500 3 1" fill="none" stroke="#2a9a2a" stroke-width="1"/><path d="M796 36.500h14" stroke="#2f6fb5" stroke-width=".8"/><path d="M818 34h5l-2.500 3z" fill="#000"/><path d="M829.500 22V47" stroke="#fff"/><rect x="1" y="50" width="24" height="22" fill="#f8f8f8"/><path d="M1.500 72V50.500H25" fill="none" stroke="#a0a0a0"/><path d="M2 71.500H24.500V51" fill="none" stroke="#fff"/><path d="M8 54.800l8.300 7.800h-3.800l2.300 5.200-1.900.9-2.300-5.200-2.600 2.500z" fill="#444"/><path d="M40.500 55v6M40.500 64v6M33 62.500h6M42 62.500h6M40 62.500h1" stroke="#444" stroke-width="1" shape-rendering="crispEdges"/><path d="M57.500 51V71" stroke="#a0a0a0"/><path d="M58.500 51V71" stroke="#fff"/><path d="M74.500 56v12" stroke="#444" stroke-width="1.200"/><path d="M97 62.500h12" stroke="#444" stroke-width="1.200"/><path d="M125 68l12-11" stroke="#444" stroke-width="1.200"/><path d="M151 66l12-10M153 69l12-10M154 60v9M158 57v9M162 55v8" stroke="#444" stroke-width="1" fill="none"/><text x="162" y="71" font-size="6.500" font-weight="bold" fill="#333" font-family="Liberation Sans">E</text><path d="M180 55.500h13" stroke="#444" stroke-dasharray="1 1"/><path d="M180 59.500h13" stroke="#444" stroke-dasharray="1 1"/><path d="M180 63.500h13" stroke="#444" stroke-dasharray="1 1"/><path d="M180 67.500h10" stroke="#444" stroke-dasharray="1 1"/><text x="190" y="72" font-size="6.500" font-weight="bold" fill="#333" font-family="Liberation Sans">F</text><text x="210.500" y="67" font-size="12" font-weight="bold" fill="#555" font-family="Liberation Sans">A</text><rect x="237.500" y="56.500" width="11" height="12" fill="none" stroke="#444" stroke-dasharray="1 1"/><path d="M240 59.500h7M243.500 59.500v7" stroke="#444" stroke-width="1.500"/><path d="M267.500 55.500l3 3-3 2-3-2zM275 63l3 2.500-3 2.500-3-2.500z" fill="#444"/><path d="M267 63l2 2 4-5" fill="none" stroke="#444" stroke-width="1.200"/><path d="M285 61.500h5l-2.500 3z" fill="#000"/><path d="M296.500 49V73" stroke="#a0a0a0"/><path d="M297.500 49V73" stroke="#fff"/><rect x="300" y="52" width="3" height="1" fill="#b0b0b0"/><rect x="300" y="54" width="3" height="1" fill="#b0b0b0"/><rect x="300" y="56" width="3" height="1" fill="#b0b0b0"/><rect x="300" y="58" width="3" height="1" fill="#b0b0b0"/><rect x="300" y="60" width="3" height="1" fill="#b0b0b0"/><rect x="300" y="62" width="3" height="1" fill="#b0b0b0"/><rect x="300" y="64" width="3" height="1" fill="#b0b0b0"/><rect x="300" y="66" width="3" height="1" fill="#b0b0b0"/><rect x="300" y="68" width="3" height="1" fill="#b0b0b0"/><rect x="300" y="70" width="3" height="1" fill="#b0b0b0"/><rect x="420" y="50" width="22" height="22" fill="#f8f8f8"/><path d="M420.500 72V50.500H442" fill="none" stroke="#a0a0a0"/><path d="M421 71.500H441.500V51" fill="none" stroke="#fff"/><path d="M557.500 49V73" stroke="#fff"/></svg><div class="lb " style="left:254px;top:25px;font-size:12px;line-height:16px;height:16px;color:#000;"><svg width="36" height="16" viewBox="0 0 3000 1333" fill="#000"><text x="0" y="1047" font-size="1000" fill="#000">新订单</text></svg></div><div class="lb " style="left:405.500px;top:25px;font-size:12px;line-height:16px;height:16px;color:#000;"><svg width="48" height="16" viewBox="0 0 4000 1333" fill="#000"><text x="0" y="1047" font-size="1000" fill="#000">自动交易</text></svg></div><div class="tf" style="left:311.500px">M1</div><div class="tf" style="left:339px">M5</div><div class="tf" style="left:365px">M15</div><div class="tf" style="left:393px">M30</div><div class="tf" style="left:424.500px">H1</div><div class="tf" style="left:451px">H4</div><div class="tf" style="left:480px">D1</div><div class="tf" style="left:507.500px">W1</div><div class="tf" style="left:534.500px">MN</div><div class="abs" style="left:0;top:972px;width:1652px;height:2px;background:#fff"></div><div class="abs" style="left:0;top:974px;width:1652px;height:1px;background:#000"></div><div class="abs" style="left:0;top:975px;width:1652px;height:1px;background:#fff"></div><div class="abs" style="left:0;top:994px;width:1652px;height:1px;background:#fff"></div><div class="ctab" style="left:9px">EURUSD,M5</div><div class="ctab" style="left:101px">GBPUSD,M15</div><div class="ctab" style="left:202px">AUDUSD,M15</div><div class="ctab" style="left:306px">NZDUSD,M15</div><div class="ctab" style="left:409px">USDJPY,M15</div><div class="ctab" style="left:504px">USDCAD,M15</div><div class="ctab" style="left:605px">WTI_M3,M5</div><div class="csep" style="left:90px"></div><div class="csep" style="left:190px"></div><div class="csep" style="left:294px"></div><div class="csep" style="left:398px"></div><div class="csep" style="left:493px"></div><div class="csep" style="left:594px"></div><div class="abs" style="left:686px;top:972px;width:92px;height:21px;background:#fff;box-sizing:border-box;border-left:1px solid #000;border-right:1px solid #000;border-bottom:1px solid #000;box-shadow:1px 1px 0 rgba(0,0,0,.35)"></div><div class="ctab" style="left:698px;color:#000;font-size:11.600px">EURUSD,H1</div><div class="lb " style="left:2px;top:1000px;font-size:12px;line-height:16px;height:16px;color:#000;"><svg width="48" height="16" viewBox="0 0 4000 1333" fill="#000"><text x="0" y="1047" font-size="1000" fill="#000">寻求帮助</text></svg><span>,</span><svg width="24" height="16" viewBox="0 0 2000 1333" fill="#000"><text x="0" y="1047" font-size="1000" fill="#000">请按</text></svg><span>F1</span><svg width="12" height="16" viewBox="0 0 1000 1333" fill="#000"><text x="0" y="1047" font-size="1000" fill="#000">键</text></svg></div><div class="abs" style="left:1115px;top:998px;width:1px;height:5px;background:#a0a0a0"></div><div class="abs" style="left:1251px;top:998px;width:1px;height:5px;background:#a0a0a0"></div><div class="abs" style="left:1368px;top:998px;width:1px;height:5px;background:#a0a0a0"></div><div class="abs" style="left:1450px;top:998px;width:1px;height:5px;background:#a0a0a0"></div><div class="abs" style="left:1531px;top:998px;width:1px;height:5px;background:#a0a0a0"></div><div class="abs" style="left:1609px;top:998px;width:1px;height:5px;background:#a0a0a0"></div><div class="abs" style="left:1121px;top:1001px;font-size:12px;line-height:13px;white-space:nowrap">Default</div><div class="abs" style="left:1257px;top:1001px;font-size:12px;line-height:13px;white-space:nowrap">2023.05.05 00:00</div><div class="abs" style="left:1374px;top:1001px;font-size:12px;line-height:13px;white-space:nowrap">O: 1.10695</div><div class="abs" style="left:1456px;top:1001px;font-size:12px;line-height:13px;white-space:nowrap">H: 1.10433</div><div class="abs" style="left:1537px;top:1001px;font-size:12px;line-height:13px;white-space:nowrap">L: 1.10300</div><div class="abs" style="left:1615px;top:1001px;font-size:12px;line-height:13px;white-space:nowrap">C: 1.10</div><div class="abs" style="left:354px;top:152px;width:615px;height:493px;background:#f0f0f0;box-shadow:0 0 0 1px rgba(120,120,120,.5)"><div class="abs" style="left:0;top:0;width:615px;height:30px;background:#fff"></div><svg class="abs" style="left:8px;top:6px" width="18" height="16" viewBox="0 0 18 16"><rect x=".5" y="1.500" width="12" height="9" fill="#fff" stroke="#5b9bd5"/><rect x="1" y="2" width="11" height="2" fill="#5b9bd5"/><path d="M3.500 5v4" stroke="#7a9cc0"/><rect x="6.500" y="6.500" width="9" height="8" rx="1.500" fill="#f4d03f" stroke="#c9a227"/><text x="9" y="13" font-size="7" font-style="italic" font-family="Liberation Serif" fill="#7a5a00">f</text></svg><div class="lb " style="left:29px;top:6px;font-size:12px;line-height:16px;height:16px;color:#999;"><svg width="48" height="16" viewBox="0 0 4000 1333" fill="#999"><text x="0" y="1047" font-size="1000" fill="#999">技术指标</text></svg><span> EURUSD,H1</span></div><div class="abs" style="left:8px;top:38px;width:497px;height:445px;background:#fff;box-sizing:border-box;border:1px solid #828790"></div></div><svg class="abs" style="left:354px;top:182px" width="260" height="110" viewBox="354 182 260 110"><g shape-rendering="crispEdges"><rect x="372.500" y="198.500" width="8" height="8" fill="#fff" stroke="#919191"/><path d="M374.500 202.500h4" stroke="#2a4ab0"/><path d="M382 202.500h6" stroke="#888" stroke-dasharray="1 1"/><rect x="372.500" y="252.500" width="8" height="8" fill="#fff" stroke="#919191"/><path d="M374.500 256.500h4" stroke="#2a4ab0"/><path d="M382 256.500h6" stroke="#888" stroke-dasharray="1 1"/><path d="M376.500 208v44" stroke="#888" stroke-dasharray="1 1"/><path d="M397.500 209v30M397.500 220.500h10M397.500 238.500h10" stroke="#888" stroke-dasharray="1 1" fill="none"/><path d="M397.500 263v12M397.500 274.500h10" stroke="#888" stroke-dasharray="1 1" fill="none"/></g><rect x="389.500" y="194.500" width="15" height="13" rx="1" fill="#fff" stroke="#2a5ad0" stroke-width="1.200"/><rect x="390" y="195" width="14" height="2.500" fill="#2a5ad0"/><path d="M392 205c2-6 4-6 5-3s3 3 5-3" fill="none" stroke="#5b7ad8" stroke-width="1.200"/><rect x="389.500" y="248.500" width="15" height="13" rx="1" fill="#fff" stroke="#2a5ad0" stroke-width="1.200"/><rect x="390" y="249" width="14" height="2.500" fill="#2a5ad0"/><path d="M392 259c2-6 4-6 5-3s3 3 5-3" fill="none" stroke="#5b7ad8" stroke-width="1.200"/><rect x="411.500" y="212.500" width="13" height="13" rx="2" fill="#f4d03f" stroke="#c9a227"/><text x="414.500" y="222.500" font-size="11" font-style="italic" font-weight="bold" font-family="Liberation Serif" fill="#7a5a10">f</text><path d="M422.500 219.800l3.200 3.200-3.200 3.200-3.200-3.200z" fill="#f9e58a" stroke="#b8860b" stroke-width=".9"/><rect x="411.500" y="230.500" width="13" height="13" rx="2" fill="#f4d03f" stroke="#c9a227"/><text x="414.500" y="240.500" font-size="11" font-style="italic" font-weight="bold" font-family="Liberation Serif" fill="#7a5a10">f</text><path d="M422.500 237.800l3.200 3.200-3.200 3.200-3.200-3.200z" fill="#f9e58a" stroke="#b8860b" stroke-width=".9"/><rect x="411.500" y="266.500" width="13" height="13" rx="2" fill="#f4d03f" stroke="#c9a227"/><text x="414.500" y="276.500" font-size="11" font-style="italic" font-weight="bold" font-family="Liberation Serif" fill="#7a5a10">f</text><path d="M422.500 273.800l3.200 3.200-3.200 3.200-3.200-3.200z" fill="#f9e58a" stroke="#b8860b" stroke-width=".9"/></svg><div class="abs" style="left:430px;top:210px;width:116px;height:18px;background:#f0f0f0"></div><div class="lb " style="left:411px;top:193px;font-size:12px;line-height:16px;height:16px;color:#000;"><svg width="72" height="16" viewBox="0 0 6000 1333" fill="#000"><text x="0" y="1047" font-size="1000" fill="#000">技术指标窗口</text></svg><span> 1</span></div><div class="lb " style="left:411px;top:247px;font-size:12px;line-height:16px;height:16px;color:#000;"><svg width="72" height="16" viewBox="0 0 6000 1333" fill="#000"><text x="0" y="1047" font-size="1000" fill="#000">技术指标窗口</text></svg><span> 2</span></div><div class="abs" style="left:431px;top:212px;font-size:11px;line-height:14px;white-space:nowrap">! PdfMa awesome (mtf)</div><div class="abs" style="left:431px;top:230px;font-size:11px;line-height:14px;white-space:nowrap">! PdfMa awesome (mtf)</div><div class="abs" style="left:431px;top:266px;font-size:11px;line-height:14px;white-space:nowrap">MCDx</div><div class="btn" style="left:868px;top:613px;width:93px;height:21px"></div><div class="lb " style="left:892px;top:616px;font-size:12px;line-height:16px;height:16px;color:#000;"><svg width="24" height="16" viewBox="0 0 2000 1333" fill="#000"><text x="0" y="1047" font-size="1000" fill="#000">关闭</text></svg><span> (C)</span></div><div class="abs" style="left:585px;top:97px;width:736px;height:497px;background:#f0f0f0;box-shadow:0 0 0 1px rgba(110,110,110,.45),0 4px 14px rgba(0,0,0,.35)"><div class="abs" style="left:0;top:0;width:736px;height:30px;background:#fff"></div><div class="abs" style="left:735px;top:0;width:1px;height:497px;background:#fff"></div><div class="abs" style="left:8px;top:7px;font-size:12.500px;line-height:16px;color:#999;white-space:nowrap;letter-spacing:.385px">Custom Indicator - ! PdfMa awesome (mtf)</div><div class="abs" style="left:664.500px;top:6px;font-size:13px;line-height:16px;color:#999">?</div><svg class="abs" style="left:707px;top:8px" width="12" height="12" viewBox="0 0 12 12"><path d="M1 1l10 10M11 1l-10 10" stroke="#808080" stroke-width="1"/></svg><div class="abs" style="left:7px;top:63px;width:724px;height:401px;background:#fff;box-sizing:border-box;border:1px solid #d9d9d9"></div></div><div class="tab" style="left:594px;top:138px;width:46px;height:22px"></div><div class="lb " style="left:599px;top:141px;font-size:12px;line-height:16px;height:16px;color:#000;"><svg width="24" height="16" viewBox="0 0 2000 1333" fill="#000"><text x="0" y="1047" font-size="1000" fill="#000">关于</text></svg></div><div class="tab" style="left:691px;top:138px;width:59px;height:22px"></div><div class="lb " style="left:696px;top:141px;font-size:12px;line-height:16px;height:16px;color:#000;"><svg width="48" height="16" viewBox="0 0 4000 1333" fill="#000"><text x="0" y="1047" font-size="1000" fill="#000">输入参数</text></svg></div><div class="tab" style="left:749px;top:138px;width:49px;height:22px"></div><div class="lb " style="left:755.500px;top:141px;font-size:12px;line-height:16px;height:16px;color:#000;"><svg width="24" height="16" viewBox="0 0 2000 1333" fill="#000"><text x="0" y="1047" font-size="1000" fill="#000">颜色</text></svg></div><div class="tab" style="left:797px;top:138px;width:49px;height:22px"></div><div class="lb " style="left:803.500px;top:141px;font-size:12px;line-height:16px;height:16px;color:#000;"><svg width="36" height="16" viewBox="0 0 3000 1333" fill="#000"><text x="0" y="1047" font-size="1000" fill="#000">水平位</text></svg></div><div class="tab" style="left:845px;top:138px;width:59px;height:22px"></div><div class="lb " style="left:851.500px;top:141px;font-size:12px;line-height:16px;height:16px;color:#000;"><svg width="48" height="16" viewBox="0 0 4000 1333" fill="#000"><text x="0" y="1047" font-size="1000" fill="#000">应用范围</text></svg></div><div class="tab" style="left:640px;top:136px;width:52px;height:25px;background:#fff"></div><div class="lb " style="left:648px;top:139px;font-size:12px;line-height:16px;height:16px;color:#000;"><svg width="24" height="16" viewBox="0 0 2000 1333" fill="#000"><text x="0" y="1047" font-size="1000" fill="#000">常用</text></svg></div><div class="cb" style="left:649px;top:219px;border-color:#333"><svg width="11" height="11" viewBox="0 0 11 11" style="display:block"><path d="M1.500 5.500l3 3 5.500-6.500" fill="none" stroke="#222" stroke-width="1.200"/></svg></div><div class="lb " style="left:665px;top:218px;font-size:12px;line-height:16px;height:16px;color:#000;"><svg width="108" height="16" viewBox="0 0 9000 1333" fill="#000"><text x="0" y="1047" font-size="1000" fill="#000">允许导入动态连接库</text></svg></div><div class="cb" style="left:649px;top:251px;border-color:#333"><svg width="11" height="11" viewBox="0 0 11 11" style="display:block"><path d="M1.500 5.500l3 3 5.500-6.500" fill="none" stroke="#222" stroke-width="1.200"/></svg></div><div class="lb " style="left:665px;top:250px;font-size:12px;line-height:16px;height:16px;color:#000;"><svg width="72" height="16" viewBox="0 0 6000 1333" fill="#000"><text x="0" y="1047" font-size="1000" fill="#000">允许导入外部</text></svg><span>EA</span><svg width="24" height="16" viewBox="0 0 2000 1333" fill="#000"><text x="0" y="1047" font-size="1000" fill="#000">交易</text></svg></div><div class="cb" style="left:649px;top:283px;border-color:#333"><svg width="11" height="11" viewBox="0 0 11 11" style="display:block"><path d="M1.500 5.500l3 3 5.500-6.500" fill="none" stroke="#222" stroke-width="1.200"/></svg></div><div class="lb " style="left:665px;top:282px;font-size:12px;line-height:16px;height:16px;color:#000;"><svg width="96" height="16" viewBox="0 0 8000 1333" fill="#000"><text x="0" y="1047" font-size="1000" fill="#000">允许修改信号设置</text></svg></div><div class="lb " style="left:687px;top:402px;font-size:12px;line-height:16px;height:16px;color:#000;"><svg width="60" height="16" viewBox="0 0 5000 1333" fill="#000"><text x="0" y="1047" font-size="1000" fill="#000">固定最小值</text></svg></div><div class="cb" style="left:750px;top:404px;border-color:#333"><svg width="11" height="11" viewBox="0 0 11 11" style="display:block"><path d="M1.500 5.500l3 3 5.500-6.500" fill="none" stroke="#222" stroke-width="1.200"/></svg></div><div class="abs" style="left:771px;top:396px;width:70px;height:26px;box-sizing:border-box;border:1px solid #7a7a7a;background:#fff"></div><div class="abs" style="left:776px;top:400px;font-size:12px;line-height:16px">0</div><div class="lb " style="left:923px;top:402px;font-size:12px;line-height:16px;height:16px;color:#000;"><svg width="60" height="16" viewBox="0 0 5000 1333" fill="#000"><text x="0" y="1047" font-size="1000" fill="#000">固定最大值</text></svg></div><div class="cb" style="left:986px;top:404px;border-color:#333"></div><div class="abs" style="left:1007px;top:396px;width:70px;height:26px;box-sizing:border-box;border:1px solid #ccc;background:#fff"></div><div class="abs" style="left:1012px;top:400px;font-size:12px;line-height:16px;color:#838383">0.0034</div><div class="btn" style="left:1037px;top:557px;width:86px;height:28px"></div><div class="lb " style="left:1068px;top:563px;font-size:12px;line-height:16px;height:16px;color:#000;"><svg width="24" height="16" viewBox="0 0 2000 1333" fill="#000"><text x="0" y="1047" font-size="1000" fill="#000">确定</text></svg></div><div class="btn" style="left:1132px;top:557px;width:86px;height:28px"></div><div class="lb " style="left:1163px;top:563px;font-size:12px;line-height:16px;height:16px;color:#000;"><svg width="24" height="16" viewBox="0 0 2000 1333" fill="#000"><text x="0" y="1047" font-size="1000" fill="#000">取消</text></svg></div><div class="btn" style="left:1226px;top:557px;width:86px;height:28px"></div><div class="lb " style="left:1257px;top:563px;font-size:12px;line-height:16px;height:16px;color:#000;"><svg width="24" height="16" viewBox="0 0 2000 1333" fill="#000"><text x="0" y="1047" font-size="1000" fill="#000">重设</text></svg></div><svg class="abs" style="left:1309px;top:582px" width="11" height="11" viewBox="0 0 11 11"><path d="M8 1h2v2h-2zM8 4.500h2v2h-2zM8 8h2v2h-2zM4.500 4.500h2v2h-2zM4.500 8h2v2h-2zM1 8h2v2h-2z" fill="#bdbdbd"/></svg></body></html>
